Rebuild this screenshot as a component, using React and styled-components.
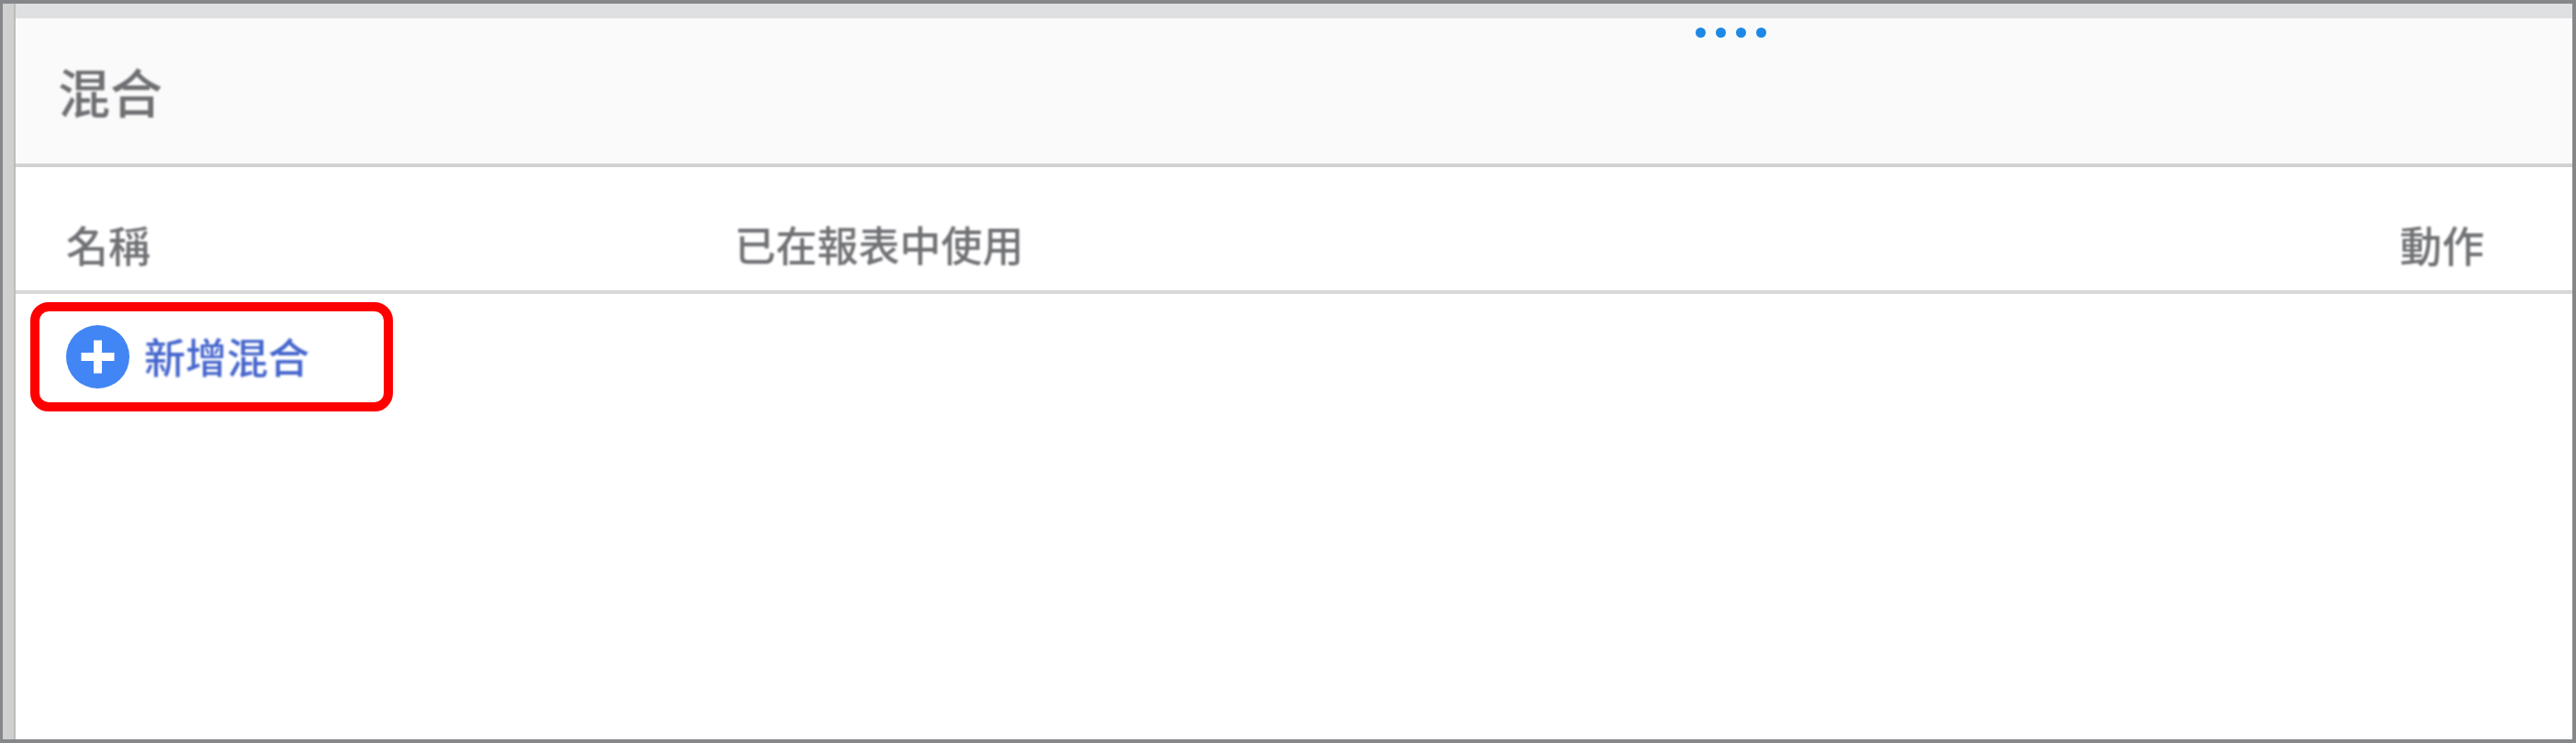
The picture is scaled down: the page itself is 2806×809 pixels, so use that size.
import React from "react";
import styled, { createGlobalStyle } from "styled-components";

const Global = createGlobalStyle`
  html, body { margin: 0; padding: 0; background: #fff; }
  #root { width: 2806px; height: 809px; }
`;
const FONT = `"Noto Sans CJK TC", "Noto Sans CJK SC", "Liberation Sans", sans-serif`;

const Frame = styled.div`
  box-sizing: border-box; width: 2806px; height: 809px;
  border: 4px solid #85878a; border-left-width: 3px;
  display: flex; font-family: ${FONT};
`;
const Rail = styled.div`
  width: 12px; flex: none; background: #d0d0d0; border-right: 2px solid #bdbdbd;
`;
const Main = styled.div`
  flex: 1; min-width: 0; display: flex; flex-direction: column; background: #fff;
`;
const TopBand = styled.div`
  height: 16px; flex: none; background: #dfe0e1;
`;
const Header = styled.div`
  position: relative; box-sizing: border-box; height: 162px; flex: none;
  background: #fafafa; border-bottom: 4px solid #d2d2d2;
  display: flex; align-items: center; padding: 0 0 0 46px;
`;
const Title = styled.h1`
  margin: -2px 0 0; font-size: 57px; line-height: 1; font-weight: 500; color: #6e6f72;
  filter: blur(0.8px);
`;
const Dots = styled.div`
  position: absolute; left: 1830px; top: 10px; display: flex; gap: 11px; filter: blur(0.6px);
`;
const Dot = styled.span`
  width: 11px; height: 11px; border-radius: 50%; background: #1e88e5;
`;
const ColumnRow = styled.div`
  box-sizing: border-box; height: 138px; flex: none;
  display: grid; grid-template-columns: 728px 1fr auto; align-items: center;
  padding: 0 96px 0 55px; border-bottom: 4px solid #d8d8d8;
`;
const Column = styled.div`
  font-size: ${p => p.$size || 45}px; line-height: 1; font-weight: 500; color: #707174; margin-top: 32px;
  filter: blur(0.8px);
`;
const Body = styled.div`
  flex: 1; padding: 9px 0 0 16px;
`;
const Highlight = styled.div`
  box-sizing: border-box; width: 395px; height: 119px;
  border: 10px solid #fe0000; border-radius: 20px;
  display: flex; align-items: center; padding: 0 0 0 29px; gap: 16px;
`;
const AddIcon = styled.svg`
  width: 69px; height: 69px; flex: none;
`;
const AddLabel = styled.span`
  font-size: 45px; line-height: 1; font-weight: 500; color: #4666cd; margin-top: -3px;
  filter: blur(0.8px);
`;

export default function App() {
  return (
    <>
      <Global />
      <Frame>
        <Rail />
        <Main>
          <TopBand />
          <Header>
            <Title>混合</Title>
            <Dots><Dot /><Dot /><Dot /><Dot /></Dots>
          </Header>
          <ColumnRow>
            <Column $size={46}>名稱</Column>
            <Column>已在報表中使用</Column>
            <Column $size={46}>動作</Column>
          </ColumnRow>
          <Body>
            <Highlight>
              <AddIcon viewBox="0 0 69 69" aria-hidden="true">
                <circle cx="34.5" cy="34.5" r="34.5" fill="#4285f4" />
                <path d="M34.5 16.5v36M16.5 34.5h36" stroke="#fff" strokeWidth="9" fill="none" />
              </AddIcon>
              <AddLabel>新增混合</AddLabel>
            </Highlight>
          </Body>
        </Main>
      </Frame>
    </>
  );
}
